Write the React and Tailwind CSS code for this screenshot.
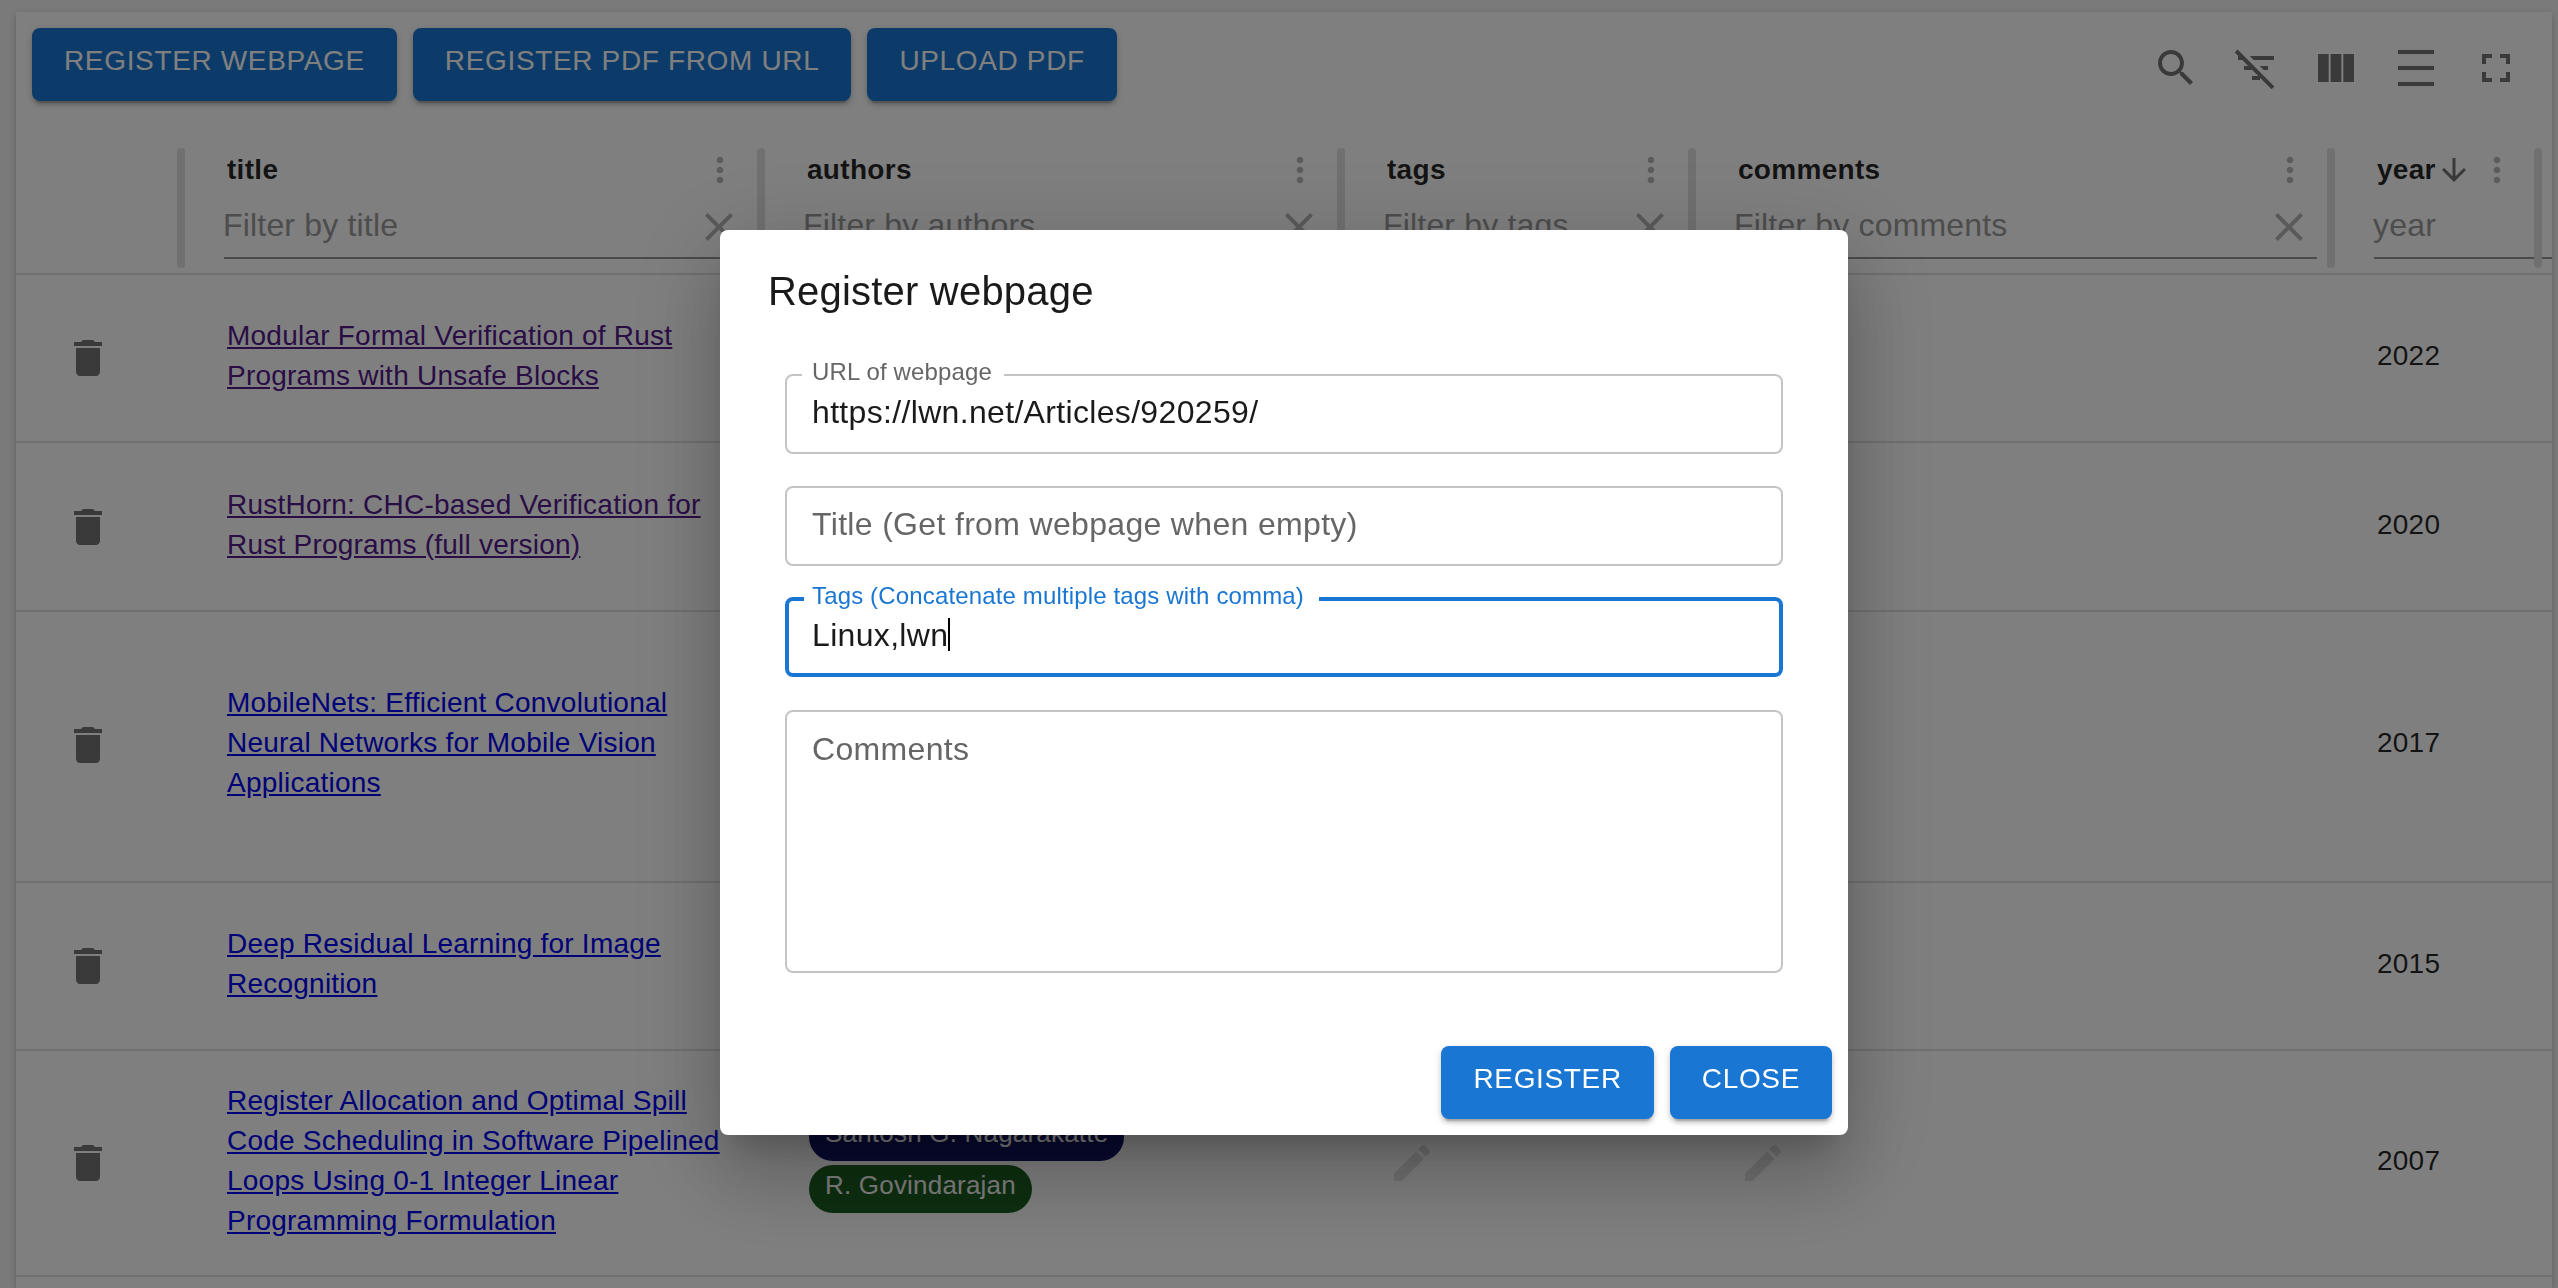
const P = {
  search: "M15.5 14h-.79l-.28-.27C15.41 12.59 16 11.11 16 9.5 16 5.91 13.09 3 9.5 3S3 5.91 3 9.5 5.91 16 9.5 16c1.61 0 3.09-.59 4.23-1.57l.27.28v.79l5 4.99L20.49 19l-4.99-5zm-6 0C7.01 14 5 11.99 5 9.5S7.01 5 9.5 5 14 7.01 14 9.5 11.99 14 9.5 14z",
  filterOff: "M10.83 8H21V6H8.83l2 2zm5 5H18v-2h-4.17l2 2zM14 16.83V18h-4v-2h3.17l-3-3H6v-2h2.17l-3-3H3V6h.17L1.39 4.22 2.8 2.81l18.38 18.38-1.41 1.41L14 16.83z",
  columns: "M14.67 5v14H9.33V5h5.34zm1 14H21V5h-5.33v14zm-7.34 0V5H3v14h5.33z",
  density: "M3 3h18v2H3zm0 16h18v2H3zm0-8h18v2H3z",
  fullscreen: "M7 14H5v5h5v-2H7v-3zm-2-4h2V7h3V5H5v5zm12 7h-3v2h5v-5h-2v3zM14 5v2h3v3h2V5h-5z",
  more: "M12 8c1.1 0 2-.9 2-2s-.9-2-2-2-2 .9-2 2 .9 2 2 2zm0 2c-1.1 0-2 .9-2 2s.9 2 2 2 2-.9 2-2-.9-2-2-2zm0 6c-1.1 0-2 .9-2 2s.9 2 2 2 2-.9 2-2-.9-2-2-2z",
  close: "M19 6.41 17.59 5 12 10.59 6.41 5 5 6.41 10.59 12 5 17.59 6.41 19 12 13.41 17.59 19 19 17.59 13.41 12 19 6.41z",
  arrow: "M20 12l-1.41-1.41L13 16.17V4h-2v12.17l-5.58-5.59L4 12l8 8 8-8z",
  del: "M6 19c0 1.1.9 2 2 2h8c1.1 0 2-.9 2-2V7H6v12zM19 4h-3.5l-1-1h-5l-1 1H5v2h14V4z",
  edit: "M3 17.25V21h3.75L17.81 9.94l-3.75-3.75L3 17.25zM20.71 7.04c.39-.39.39-1.02 0-1.41l-2.34-2.34a.9959.9959 0 0 0-1.41 0l-1.83 1.83 3.75 3.75 1.83-1.83z",
};

function Icon({ d, className }) {
  return (
    <svg viewBox="0 0 24 24" fill="currentColor" className={className}>
      <path d={d} />
    </svg>
  );
}

const shadow2 = "shadow-[0_6px_2px_-4px_rgba(0,0,0,0.2),0_4px_4px_0_rgba(0,0,0,0.14),0_2px_10px_0_rgba(0,0,0,0.12)]";

function Btn({ children }) {
  return (
    <button className={`h-[73px] px-8 pb-2 rounded-lg bg-[#1976d2] text-white text-[28px] leading-none uppercase tracking-[0.65px] flex items-center ${shadow2}`}>
      {children}
    </button>
  );
}

const widths = "grid-cols-[169px_580px_580px_351px_639px_207px]";

function HeadCell({ name, placeholder, sorted, wide, noClear }) {
  return (
    <div className="flex items-start pt-8 min-w-0">
      <div className="flex-1 min-w-0 pl-[39px] pr-[10px]">
        <div className="h-[44px] flex items-center pl-[3px] pr-[7px]">
          <span className="text-[28px] font-bold tracking-[0.3px] text-black/85">{name}</span>
          {sorted && <Icon d={P.arrow} className="w-9 h-9 text-[#757575]" />}
          <Icon d={P.more} className="w-10 h-10 text-[#b8b8b8] ml-auto shrink-0" />
        </div>
        <div className={`h-[67px] flex items-center border-b-2 border-[#949494] ${wide ? "w-[179px]" : ""}`}>
          <span className="text-[32px] tracking-[0.18px] text-[#9a9a9a] -ml-[1px]">{placeholder}</span>
          {!noClear && <Icon d={P.close} className="w-12 h-12 mt-[5px] mr-[4px] ml-auto text-[#b4b4b4] shrink-0" />}
        </div>
      </div>
      <div className="w-2 h-[120px] rounded bg-[#e0e0e0] shrink-0 relative" />
    </div>
  );
}

const rows = [
  { h: "h-[168px]", visited: true, year: "2022", title: "Modular Formal Verification of Rust Programs with Unsafe Blocks" },
  { h: "h-[169px]", visited: true, year: "2020", title: "RustHorn: CHC-based Verification for Rust Programs (full version)" },
  { h: "h-[271px] pb-[4px]", year: "2017", title: "MobileNets: Efficient Convolutional Neural Networks for Mobile Vision Applications" },
  { h: "h-[168px]", year: "2015", title: "Deep Residual Learning for Image Recognition" },
  { h: "h-[226px]", year: "2007", last: true, title: "Register Allocation and Optimal Spill Code Scheduling in Software Pipelined Loops Using 0-1 Integer Linear Programming Formulation" },
];

function Chip({ className, children }) {
  return (
    <div className={`h-12 px-4 pb-2 rounded-3xl flex items-center text-[26px] tracking-[0.2px] text-white w-fit ${className}`}>
      {children}
    </div>
  );
}

function Row({ r }) {
  return (
    <div className={`grid ${widths} ${r.h} border-b-2 border-[#e0e0e0] text-[28px] leading-[40px] tracking-[0.23px] text-black/85`}>
      <div className="flex items-center pl-12">
        <Icon d={P.del} className="w-12 h-12 text-[#757575]" />
      </div>
      <div className="flex items-center pl-[42px] pb-1">
        <a href="#" onClick={(e) => e.preventDefault()} className={`w-[510px] underline ${r.visited ? "text-[#551a8b]" : "text-[#0000ee]"}`}>{r.title}</a>
      </div>
      <div className="flex flex-col justify-end gap-1 pl-[44px] pb-[62px]">
        {r.last && <Chip className="bg-[#101460]">Santosh G. Nagarakatte</Chip>}
        {r.last && <Chip className="bg-[#1b5e20]">R. Govindarajan</Chip>}
      </div>
      <div className="flex items-center pl-[43px]">
        {r.last && <Icon d={P.edit} className="w-12 h-12 text-[#e0e0e0]" />}
      </div>
      <div className="flex items-center pl-[43px]">
        {r.last && <Icon d={P.edit} className="w-12 h-12 text-[#e0e0e0]" />}
      </div>
      <div className="flex items-center pl-[42px] pb-1">{r.year}</div>
    </div>
  );
}

function Field({ label, value, focused, placeholder, tall, className, caret }) {
  const border = focused ? "border-4 border-[#1976d2]" : "border-2 border-[#c4c4c4]";
  return (
    <div className={`relative rounded-lg ${border} ${tall ? "h-[263px] items-start pt-[13px]" : "h-[80px] items-center pb-[5px]"} flex ${focused ? "pl-[23px]" : "pl-[25px]"} text-[32px] tracking-[0.33px] ${className}`}>
      {label && (
        <span className={`absolute left-[15px] ${focused ? "-top-[19px] pl-2 pr-[15px] text-[#1976d2]" : "-top-[18px] pl-[10px] pr-[12px] text-[#666666]"} bg-white text-[24px] leading-[28px] tracking-[0.15px]`}>
          {label}
        </span>
      )}
      {value ? (
        <span className="text-[#1a1a1a]">{value}</span>
      ) : (
        <span className="text-[#666666]">{placeholder}</span>
      )}
      {caret && <span className="w-[2px] h-[33px] bg-black" />}
    </div>
  );
}

export default function App() {
  return (
    <div className="relative w-[2558px] h-[1288px] overflow-hidden bg-[#f5f5f5] font-['Liberation_Sans',sans-serif]">
      <div className={`ml-4 mt-3 w-[2536px] h-[1276px] overflow-hidden bg-white ${shadow2}`}>
        <div className="h-[104px] pt-4 px-4 flex items-start justify-between">
          <div className="flex gap-4">
            <Btn>Register webpage</Btn>
            <Btn>Register PDF from URL</Btn>
            <Btn>Upload PDF</Btn>
          </div>
          <div className="flex">
            {[P.search, P.filterOff, P.columns, P.density, P.fullscreen].map((d) => (
              <div key={d} className="p-4">
                <Icon d={d} className="w-12 h-12 text-[#757575]" />
              </div>
            ))}
          </div>
        </div>
        <div className={`grid ${widths} h-[159px] border-b-2 border-[#e0e0e0]`}>
          <div className="flex items-start justify-end pt-8">
            <div className="w-2 h-[120px] rounded bg-[#e0e0e0]" />
          </div>
          <HeadCell name="title" placeholder="Filter by title" />
          <HeadCell name="authors" placeholder="Filter by authors" />
          <HeadCell name="tags" placeholder="Filter by tags" />
          <HeadCell name="comments" placeholder="Filter by comments" />
          <HeadCell name="year" placeholder="year" sorted wide noClear />
        </div>
        {rows.map((r) => (
          <Row key={r.year} r={r} />
        ))}
      </div>

      <div className="fixed inset-0 bg-black/50 flex items-start justify-center pl-[10px] pt-[230px]">
        <div className="w-[1128px] h-[905px] bg-white rounded-lg flex flex-col shadow-[0_22px_30px_-14px_rgba(0,0,0,0.2),0_48px_76px_6px_rgba(0,0,0,0.14),0_18px_92px_16px_rgba(0,0,0,0.12)]">
          <h2 className="px-12 pt-[29px] h-[144px] text-[40px] leading-[64px] tracking-[0.2px] text-[#1a1a1a]">Register webpage</h2>
          <div className="px-[65px] flex flex-col">
            <Field label="URL of webpage" value="https://lwn.net/Articles/920259/" />
            <Field placeholder="Title (Get from webpage when empty)" className="mt-8" />
            <Field label="Tags (Concatenate multiple tags with comma)" value="Linux,lwn" focused caret className="mt-[31px]" />
            <Field placeholder="Comments" tall className="mt-[33px]" />
          </div>
          <div className="mt-auto p-4 flex justify-end gap-4">
            <Btn>Register</Btn>
            <Btn>Close</Btn>
          </div>
        </div>
      </div>
    </div>
  );
}
